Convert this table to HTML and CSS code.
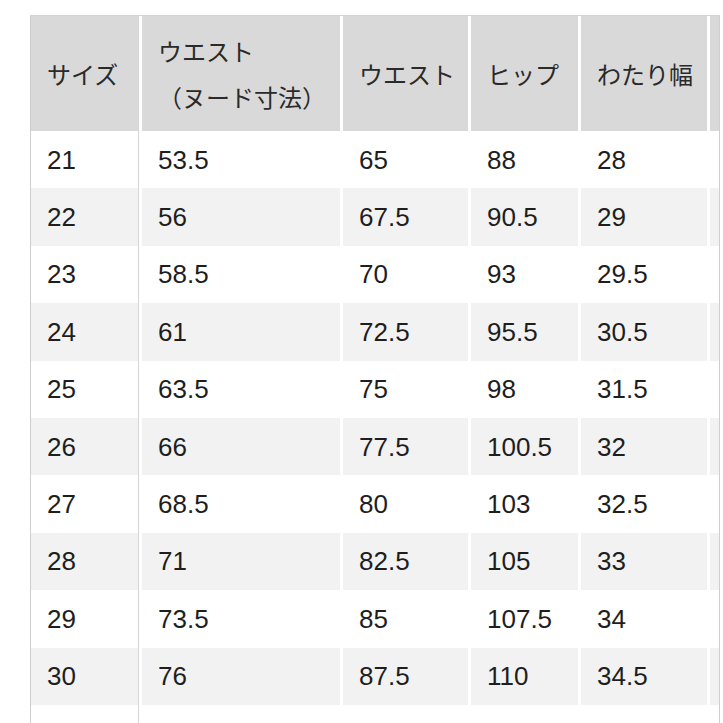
FILE: index.html
```html
<!DOCTYPE html>
<html lang="ja">
<head>
<meta charset="utf-8">
<link rel="stylesheet" href="styles.css">
</head>
<body>
<div class="wrap">
<table class="size-table">
  <colgroup>
    <col class="c1"><col class="c2"><col class="c3"><col class="c4"><col class="c5"><col class="c6">
  </colgroup>
  <thead>
    <tr>
      <th>サイズ</th>
      <th>ウエスト<br>（ヌード寸法）</th>
      <th>ウエスト</th>
      <th>ヒップ</th>
      <th>わたり幅</th>
      <th class="edge"></th>
    </tr>
  </thead>
  <tbody>
    <tr><td>21</td><td>53.5</td><td>65</td><td>88</td><td>28</td><td class="edge"></td></tr>
    <tr><td>22</td><td>56</td><td>67.5</td><td>90.5</td><td>29</td><td class="edge"></td></tr>
    <tr><td>23</td><td>58.5</td><td>70</td><td>93</td><td>29.5</td><td class="edge"></td></tr>
    <tr><td>24</td><td>61</td><td>72.5</td><td>95.5</td><td>30.5</td><td class="edge"></td></tr>
    <tr><td>25</td><td>63.5</td><td>75</td><td>98</td><td>31.5</td><td class="edge"></td></tr>
    <tr><td>26</td><td>66</td><td>77.5</td><td>100.5</td><td>32</td><td class="edge"></td></tr>
    <tr><td>27</td><td>68.5</td><td>80</td><td>103</td><td>32.5</td><td class="edge"></td></tr>
    <tr><td>28</td><td>71</td><td>82.5</td><td>105</td><td>33</td><td class="edge"></td></tr>
    <tr><td>29</td><td>73.5</td><td>85</td><td>107.5</td><td>34</td><td class="edge"></td></tr>
    <tr><td>30</td><td>76</td><td>87.5</td><td>110</td><td>34.5</td><td class="edge"></td></tr>
    <tr><td>31</td><td>78.5</td><td>90</td><td>112.5</td><td>35</td><td class="edge"></td></tr>
  </tbody>
</table>
</div>
</body>
</html>
```

FILE: styles.css
```css
html, body {
  margin: 0;
  padding: 0;
  background: #ffffff;
  overflow: hidden;
  height: 723px;
}

.wrap {
  padding: 15px 0 0 30px;
}

.size-table {
  border-collapse: separate;
  border-spacing: 0;
  table-layout: fixed;
  width: 690px;
  border-left: 1px solid #cdcdcd;
  border-right: 1px solid #cfcfcf;
  border-top: 1px solid #d4d4d4;
  font-family: "Liberation Sans", "Noto Sans CJK JP", sans-serif;
  color: #1e1e1e;
}

.c1 { width: 111px; }
.c2 { width: 201px; }
.c3 { width: 128px; }
.c4 { width: 110px; }
.c5 { width: 129px; }
.c6 { width: 9px; }

.size-table th,
.size-table td {
  border-right: 3px solid #ffffff;
  padding: 0 0 0 16px;
  text-align: left;
  vertical-align: middle;
  white-space: nowrap;
}

.size-table th.edge,
.size-table td.edge {
  border-right: 0;
  padding: 0;
}

.size-table th:first-child,
.size-table td:first-child {
  box-shadow: inset -1px 0 0 #d6d6d6;
}

.size-table th {
  height: 115px;
  background: #d9d9d9;
  font-family: "Noto Sans CJK JP", "Liberation Sans", sans-serif;
  font-weight: normal;
  font-size: 24px;
  line-height: 46px;
  color: #2a2a2a;
}

.size-table td {
  height: 57.4px;
  font-size: 26px;
  line-height: 30px;
  background: #ffffff;
}

.size-table tbody tr:nth-child(even) td {
  background: #f2f2f2;
}
```
